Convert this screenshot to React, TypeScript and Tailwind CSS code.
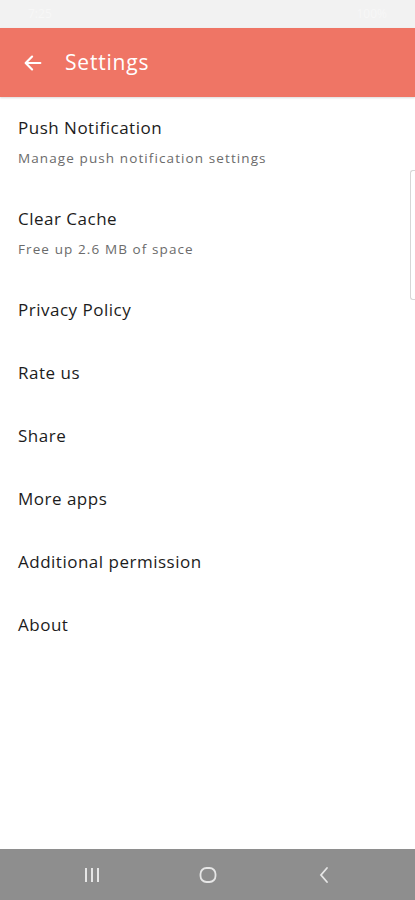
import React from 'react';

const items: { title: string; sub?: string }[] = [
  { title: 'Push Notification', sub: 'Manage push notification settings' },
  { title: 'Clear Cache', sub: 'Free up 2.6 MB of space' },
  { title: 'Privacy Policy' },
  { title: 'Rate us' },
  { title: 'Share' },
  { title: 'More apps' },
  { title: 'Additional permission' },
  { title: 'About' },
];

export default function App() {
  return (
    <div className="relative flex h-[900px] w-[415px] flex-col bg-white font-['Open_Sans',sans-serif]">
      {/* status bar, nearly invisible in the shot */}
      <div className="flex h-[28px] items-center justify-between bg-[#f2f2f2] px-[28px] text-[12px] text-[#f7f7f7]">
        <span>7:25</span>
        <span>100%</span>
      </div>

      <header className="flex h-[69px] items-center bg-[#ef7565] pl-[22px] shadow-[0_1px_2px_rgba(0,0,0,0.15)]">
        <svg width="22" height="22" viewBox="0 0 24 24" fill="none" stroke="#fff" strokeWidth="2.4" strokeLinecap="round" strokeLinejoin="round">
          <path d="M20 12H5" />
          <path d="M11 5l-7 7 7 7" />
        </svg>
        <h1 className="ml-[21px] text-[21px] font-medium tracking-[0.8px] text-white">Settings</h1>
      </header>

      <main className="flex-1">
        {items.map((it) => (
          <div
            key={it.title}
            className={`flex flex-col justify-center px-[18px] pb-[2px] ${it.sub ? 'h-[91px]' : 'h-[63px]'}`}
          >
            <div className="text-[17px] leading-[24px] tracking-[0.5px] text-[#1c1c1c]">{it.title}</div>
            {it.sub && (
              <div className="mt-[8px] text-[13.5px] leading-[20px] tracking-[1.1px] text-[#6b6b6b]">{it.sub}</div>
            )}
          </div>
        ))}
      </main>

      <div className="absolute right-0 top-[170px] h-[130px] w-[5px] rounded-l-[3px] border border-r-0 border-[#d6d6d6]" />

      <nav className="flex h-[51px] items-center justify-center gap-[96px] bg-[#8e8e8e]">
        <svg width="20" height="18" viewBox="0 0 20 18" fill="#e6e6e6">
          <rect x="3" y="2" width="2" height="14" />
          <rect x="9" y="2" width="2" height="14" />
          <rect x="15" y="2" width="2" height="14" />
        </svg>
        <svg width="20" height="20" viewBox="0 0 20 20" fill="none" stroke="#e6e6e6" strokeWidth="1.8">
          <rect x="2.5" y="3" width="15" height="14" rx="6" />
        </svg>
        <svg width="20" height="20" viewBox="0 0 20 20" fill="none" stroke="#e6e6e6" strokeWidth="1.8" strokeLinecap="round">
          <path d="M13 3l-6 7 6 7" />
        </svg>
      </nav>
    </div>
  );
}
